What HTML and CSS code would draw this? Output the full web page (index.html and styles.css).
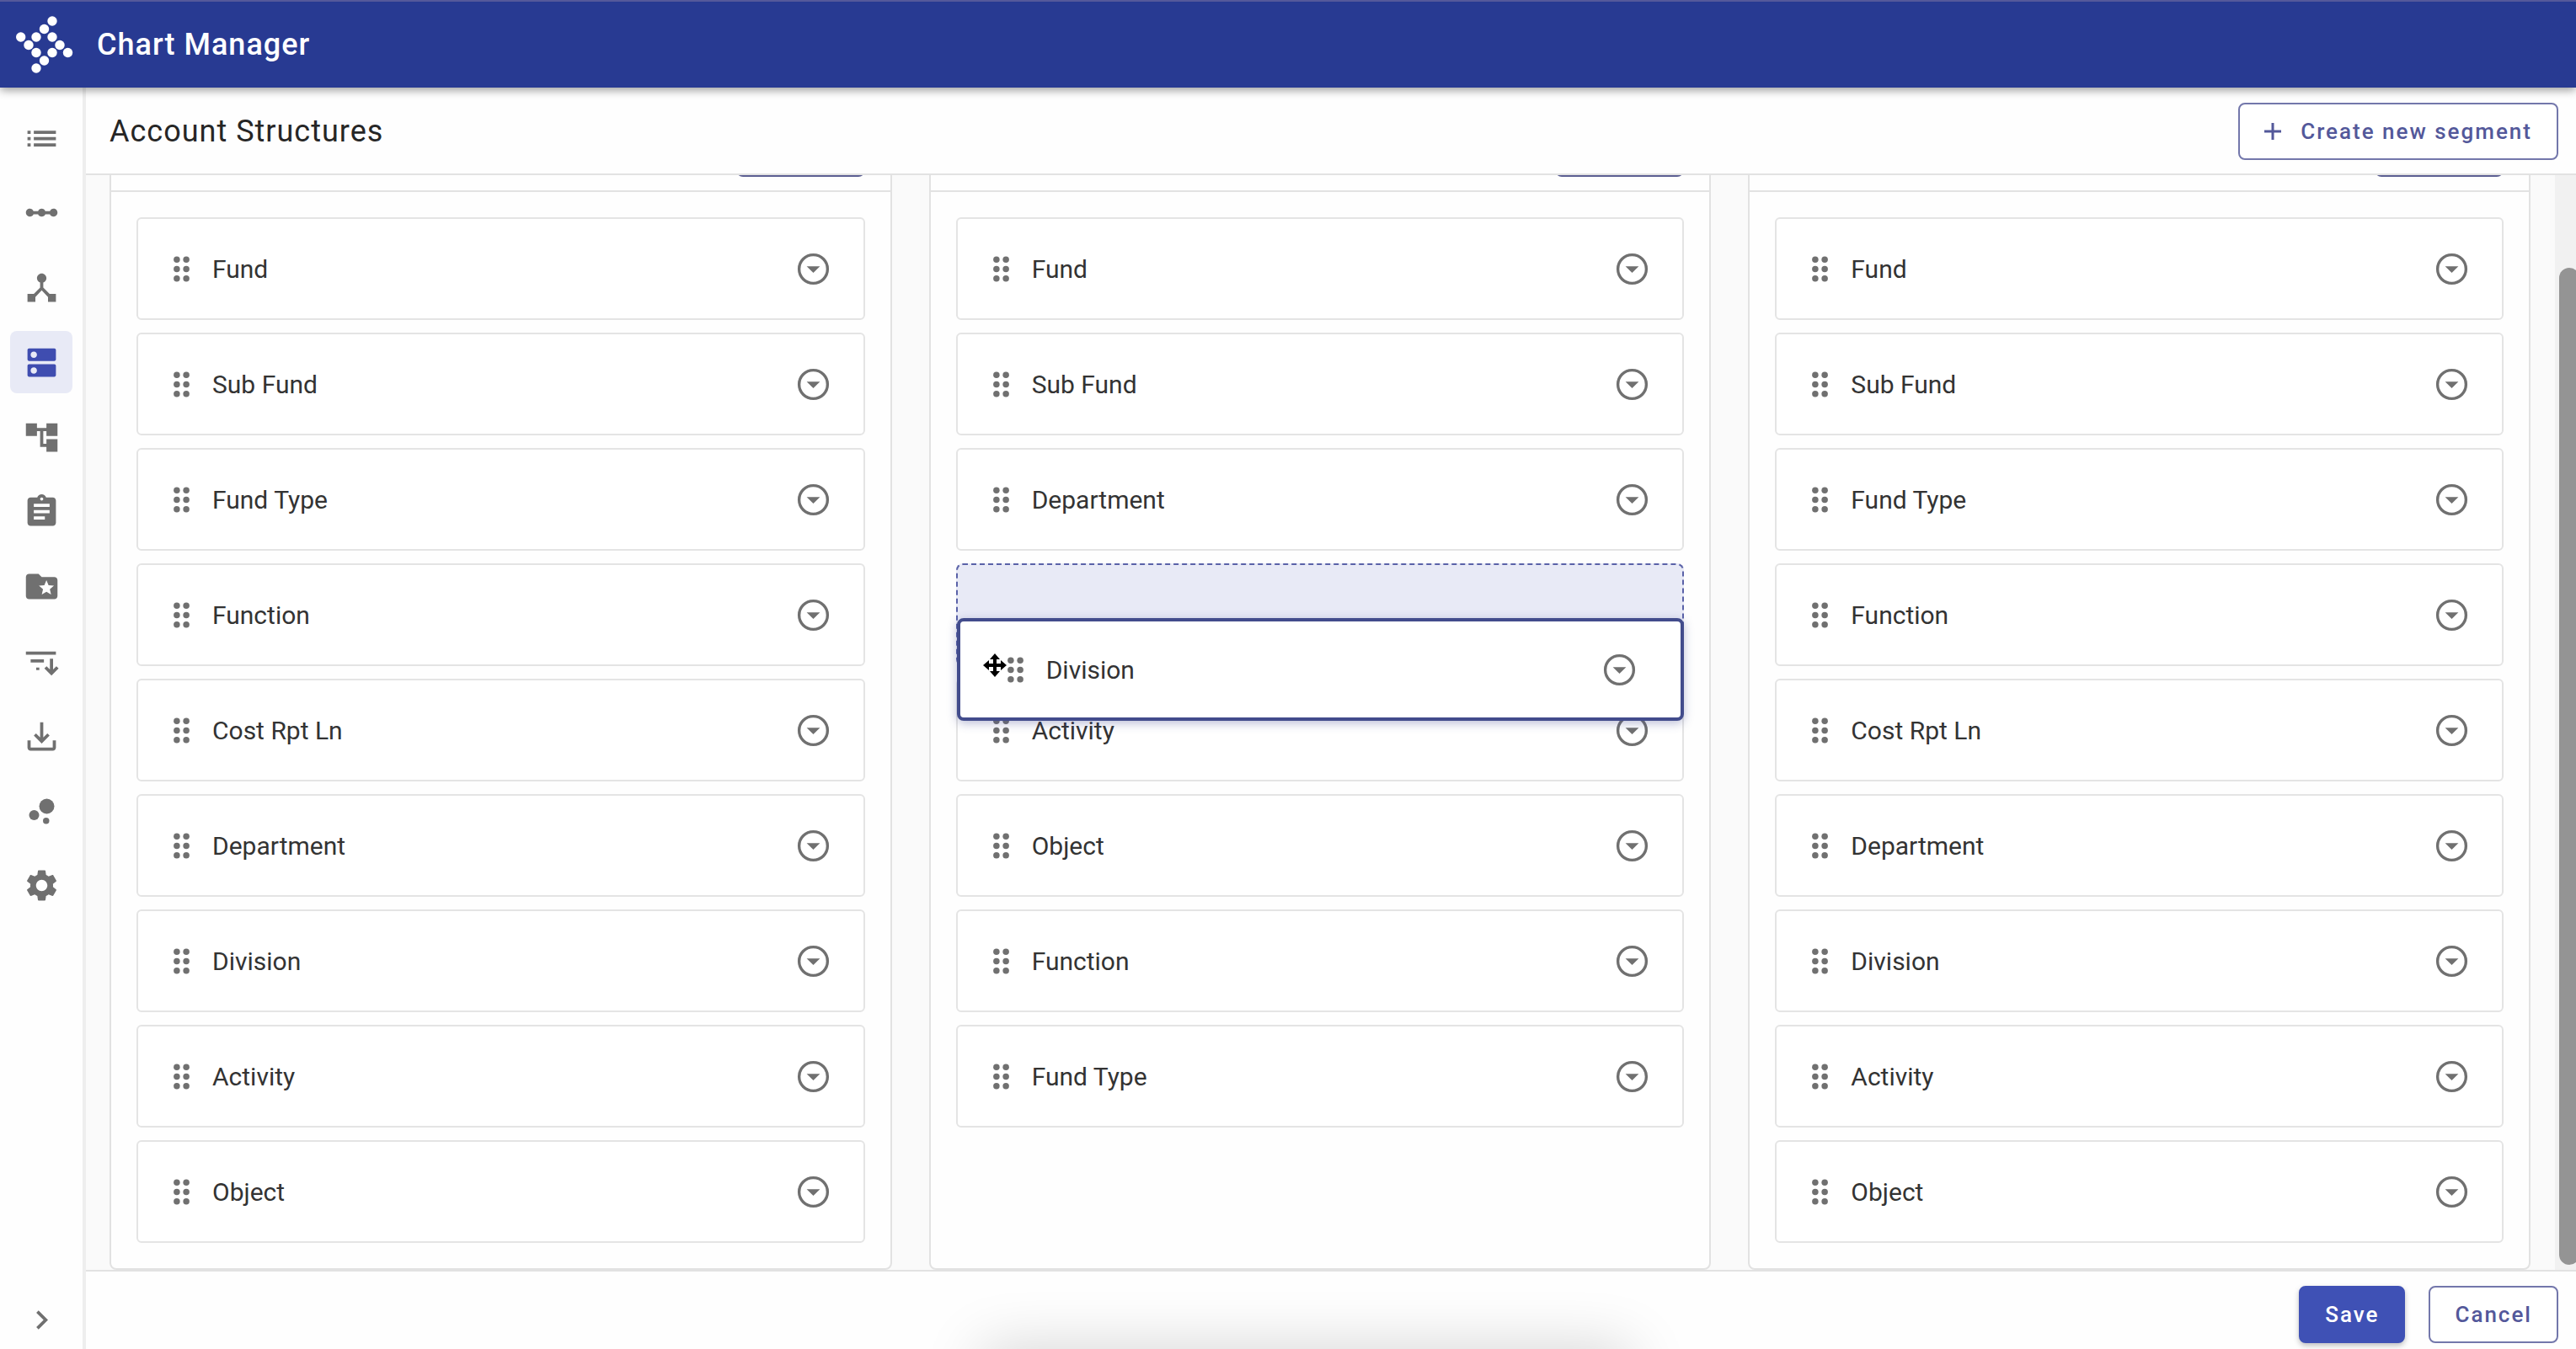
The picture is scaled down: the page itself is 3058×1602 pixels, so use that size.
FILE: index.html
```html
<!DOCTYPE html>
<html lang="en">
<head>
<meta charset="utf-8">
<title>Chart Manager</title>
<link rel="stylesheet" href="styles.css">
</head>
<body>
<svg class="sprite" aria-hidden="true">
  <symbol id="grip" viewBox="0 0 24 24"><circle cx="9" cy="6" r="2"/><circle cx="15" cy="6" r="2"/><circle cx="9" cy="12" r="2"/><circle cx="15" cy="12" r="2"/><circle cx="9" cy="18" r="2"/><circle cx="15" cy="18" r="2"/></symbol>
  <symbol id="drop" viewBox="0 0 24 24"><circle cx="12" cy="12" r="9" fill="none" stroke="currentColor" stroke-width="1.8"/><path d="M7.800 10.200h8.400L12 14.400z"/></symbol>
</svg>

<header class="topbar">
  <svg class="logo" viewBox="0 0 68 68" aria-hidden="true"><circle cx="43" cy="6" r="5.700"/><circle cx="33.500" cy="15.500" r="5.700"/><circle cx="24" cy="25" r="5.700"/><circle cx="43" cy="25" r="5.700"/><circle cx="5.700" cy="25" r="5.700"/><circle cx="15" cy="34.500" r="5.700"/><circle cx="52" cy="34.500" r="5.700"/><circle cx="24" cy="43.500" r="5.700"/><circle cx="43" cy="43.500" r="5.700"/><circle cx="61.500" cy="43.500" r="5.700"/><circle cx="33.500" cy="53" r="5.700"/><circle cx="24" cy="62" r="5.700"/></svg>
  <span class="brand">Chart Manager</span>
</header>

<div class="shell">
  <aside class="sidebar">
    <nav class="nav" aria-label="Main">
      <a class="nav-item" href="#" aria-label="List"><svg class="icon" viewBox="0 0 24 24"><path d="M3 13h2v-2H3v2zm0 4h2v-2H3v2zm0-8h2V7H3v2zm4 4h14v-2H7v2zm0 4h14v-2H7v2zM7 7v2h14V7H7z"/></svg></a>
      <a class="nav-item" href="#" aria-label="Segments"><svg class="icon" viewBox="0 0 24 24"><path d="M19.500 9.500c-1.030 0-1.900.62-2.290 1.500h-2.920C13.900 10.120 13.030 9.500 12 9.500s-1.900.62-2.290 1.500H6.790c-.39-.88-1.260-1.500-2.290-1.500C3.120 9.500 2 10.620 2 12s1.120 2.500 2.500 2.500c1.030 0 1.900-.62 2.290-1.500h2.920c.39.88 1.260 1.500 2.290 1.500s1.900-.62 2.290-1.500h2.920c.39.88 1.260 1.500 2.290 1.500 1.380 0 2.500-1.120 2.500-2.500s-1.120-2.500-2.500-2.500z"/></svg></a>
      <a class="nav-item" href="#" aria-label="Hierarchies"><svg class="icon" viewBox="0 0 24 24"><path d="M17 16l-4-4V8.820C14.160 8.400 15 7.300 15 6c0-1.660-1.340-3-3-3S9 4.340 9 6c0 1.300.84 2.400 2 2.820V12l-4 4H3v5h5v-3.050l4-4.200 4 4.200V21h5v-5h-4z"/></svg></a>
      <a class="nav-item active" href="#" aria-label="Account structures" aria-current="page"><svg class="icon" viewBox="0 0 24 24"><path d="M20 13H4c-.55 0-1 .45-1 1v6c0 .55.45 1 1 1h16c.55 0 1-.45 1-1v-6c0-.55-.45-1-1-1zM7 19c-1.100 0-2-.9-2-2s.9-2 2-2 2 .9 2 2-.9 2-2 2zM20 3H4c-.55 0-1 .45-1 1v6c0 .55.45 1 1 1h16c.55 0 1-.45 1-1V4c0-.55-.45-1-1-1zM7 9c-1.100 0-2-.9-2-2s.9-2 2-2 2 .9 2 2-.9 2-2 2z"/></svg></a>
      <a class="nav-item" href="#" aria-label="Account tree"><svg class="icon" viewBox="0 0 24 24"><path d="M22 11V3h-7v3H9V3H2v8h7V8h2v10h4v3h7v-8h-7v3h-2V8h2v3z"/></svg></a>
      <a class="nav-item" href="#" aria-label="Assignments"><svg class="icon" viewBox="0 0 24 24"><path d="M19 3h-4.180C14.400 1.840 13.300 1 12 1c-1.300 0-2.400.84-2.820 2H5c-1.100 0-2 .9-2 2v14c0 1.100.9 2 2 2h14c1.100 0 2-.9 2-2V5c0-1.100-.9-2-2-2zm-7 0c.55 0 1 .45 1 1s-.45 1-1 1-1-.45-1-1 .45-1 1-1zm2 14H7v-2h7v2zm3-4H7v-2h10v2zm0-4H7V7h10v2z"/></svg></a>
      <a class="nav-item" href="#" aria-label="Favorites"><svg class="icon" viewBox="0 0 24 24"><path d="M20 6h-8l-2-2H4c-1.100 0-1.990.9-1.990 2L2 18c0 1.100.9 2 2 2h16c1.100 0 2-.9 2-2V8c0-1.100-.9-2-2-2zm-2.060 11L15 15.280 12.060 17l.78-3.330-2.590-2.240 3.410-.29L15 8l1.340 3.140 3.410.29-2.590 2.240.78 3.330z"/></svg></a>
      <a class="nav-item" href="#" aria-label="Sort"><svg class="icon" viewBox="0 0 24 24"><path d="M2 5.700h19v2H2zM5 10.700h8.400v2H5zM8.500 15.900h2v1.600h-2zM17.200 10.300h2v6.800l2.100-2.100 1.400 1.400-4.500 4.500-4.500-4.500 1.400-1.400 2.100 2.100z"/></svg></a>
      <a class="nav-item" href="#" aria-label="Download"><svg class="icon" viewBox="0 0 24 24"><path d="M19 14.500V19H5v-4.500H3V19c0 1.100.9 2 2 2h14c1.100 0 2-.9 2-2v-4.500zM13 12.670l2.590-2.580L17 11.500l-5 5-5-5 1.410-1.410L11 12.670V3h2z"/></svg></a>
      <a class="nav-item" href="#" aria-label="Bubbles"><svg class="icon" viewBox="0 0 24 24"><circle cx="7.200" cy="14.400" r="3.200"/><circle cx="14.800" cy="18" r="2"/><circle cx="15.200" cy="8.800" r="4.800"/></svg></a>
      <a class="nav-item" href="#" aria-label="Settings"><svg class="icon" viewBox="0 0 24 24"><path d="M19.140 12.940c.04-.3.060-.61.060-.94 0-.32-.02-.64-.07-.94l2.030-1.580c.18-.14.230-.41.120-.61l-1.920-3.320c-.12-.22-.37-.29-.59-.22l-2.390.96c-.5-.38-1.030-.7-1.620-.94l-.36-2.540c-.04-.24-.24-.41-.48-.41h-3.840c-.24 0-.43.170-.47.410l-.36 2.540c-.59.240-1.130.570-1.620.940l-2.390-.96c-.22-.08-.47 0-.59.220L2.740 8.870c-.12.210-.08.470.120.610l2.030 1.580c-.05.3-.09.630-.09.940s.02.640.070.940l-2.030 1.580c-.18.140-.23.410-.12.610l1.920 3.320c.12.220.370.290.590.220l2.390-.96c.5.380 1.030.7 1.620.940l.36 2.540c.05.240.240.410.480.410h3.840c.24 0 .44-.17.470-.41l.36-2.540c.59-.24 1.130-.56 1.620-.94l2.390.96c.22.080.470 0 .59-.22l1.920-3.320c.12-.22.070-.47-.12-.61l-2.010-1.580zM12 15.600c-1.980 0-3.600-1.620-3.600-3.600s1.620-3.600 3.600-3.600 3.600 1.620 3.600 3.600-1.620 3.600-3.600 3.600z"/></svg></a>
    </nav>
    <button class="expand" type="button" aria-label="Expand menu"><svg class="icon" viewBox="0 0 24 24"><path d="M10 6L8.590 7.410 13.170 12l-4.580 4.590L10 18l6-6z"/></svg></button>
  </aside>

  <main class="page">
    <div class="page-head">
      <h1 class="title">Account Structures</h1>
      <button class="btn btn-create" type="button"><svg class="plus" viewBox="0 0 20 20" aria-hidden="true"><path d="M10 0v20M0 10h20"/></svg>Create new segment</button>
    </div>

    <div class="viewport">
      <div class="columns">
        <section class="column">
          <div class="column-head"><button class="btn column-btn" type="button" aria-label="Edit structure"></button></div>
          <ul class="list">
            <li class="card"><svg class="icon"><use href="#grip"/></svg><span class="label">Fund</span><button class="toggle" type="button" aria-label="Open Fund"><svg class="icon"><use href="#drop"/></svg></button></li>
            <li class="card"><svg class="icon"><use href="#grip"/></svg><span class="label">Sub Fund</span><button class="toggle" type="button" aria-label="Open Sub Fund"><svg class="icon"><use href="#drop"/></svg></button></li>
            <li class="card"><svg class="icon"><use href="#grip"/></svg><span class="label">Fund Type</span><button class="toggle" type="button" aria-label="Open Fund Type"><svg class="icon"><use href="#drop"/></svg></button></li>
            <li class="card"><svg class="icon"><use href="#grip"/></svg><span class="label">Function</span><button class="toggle" type="button" aria-label="Open Function"><svg class="icon"><use href="#drop"/></svg></button></li>
            <li class="card"><svg class="icon"><use href="#grip"/></svg><span class="label">Cost Rpt Ln</span><button class="toggle" type="button" aria-label="Open Cost Rpt Ln"><svg class="icon"><use href="#drop"/></svg></button></li>
            <li class="card"><svg class="icon"><use href="#grip"/></svg><span class="label">Department</span><button class="toggle" type="button" aria-label="Open Department"><svg class="icon"><use href="#drop"/></svg></button></li>
            <li class="card"><svg class="icon"><use href="#grip"/></svg><span class="label">Division</span><button class="toggle" type="button" aria-label="Open Division"><svg class="icon"><use href="#drop"/></svg></button></li>
            <li class="card"><svg class="icon"><use href="#grip"/></svg><span class="label">Activity</span><button class="toggle" type="button" aria-label="Open Activity"><svg class="icon"><use href="#drop"/></svg></button></li>
            <li class="card"><svg class="icon"><use href="#grip"/></svg><span class="label">Object</span><button class="toggle" type="button" aria-label="Open Object"><svg class="icon"><use href="#drop"/></svg></button></li>
          </ul>
        </section>

        <section class="column">
          <div class="column-head"><button class="btn column-btn" type="button" aria-label="Edit structure"></button></div>
          <ul class="list">
            <li class="card"><svg class="icon"><use href="#grip"/></svg><span class="label">Fund</span><button class="toggle" type="button" aria-label="Open Fund"><svg class="icon"><use href="#drop"/></svg></button></li>
            <li class="card"><svg class="icon"><use href="#grip"/></svg><span class="label">Sub Fund</span><button class="toggle" type="button" aria-label="Open Sub Fund"><svg class="icon"><use href="#drop"/></svg></button></li>
            <li class="card"><svg class="icon"><use href="#grip"/></svg><span class="label">Department</span><button class="toggle" type="button" aria-label="Open Department"><svg class="icon"><use href="#drop"/></svg></button></li>
            <li class="slot">
              <div class="card dragged">
                <svg class="icon"><use href="#grip"/></svg><span class="label">Division</span><button class="toggle" type="button" aria-label="Open Division"><svg class="icon"><use href="#drop"/></svg></button>
                <svg class="cursor" viewBox="0 0 28 28" aria-hidden="true"><path d="M14 0l6 7h-4v5h5V8l7 6-7 6v-4h-5v5h4l-6 7-6-7h4v-5H7v4l-7-6 7-6v4h5V7H8z"/></svg>
              </div>
            </li>
            <li class="card"><svg class="icon"><use href="#grip"/></svg><span class="label">Activity</span><button class="toggle" type="button" aria-label="Open Activity"><svg class="icon"><use href="#drop"/></svg></button></li>
            <li class="card"><svg class="icon"><use href="#grip"/></svg><span class="label">Object</span><button class="toggle" type="button" aria-label="Open Object"><svg class="icon"><use href="#drop"/></svg></button></li>
            <li class="card"><svg class="icon"><use href="#grip"/></svg><span class="label">Function</span><button class="toggle" type="button" aria-label="Open Function"><svg class="icon"><use href="#drop"/></svg></button></li>
            <li class="card"><svg class="icon"><use href="#grip"/></svg><span class="label">Fund Type</span><button class="toggle" type="button" aria-label="Open Fund Type"><svg class="icon"><use href="#drop"/></svg></button></li>
          </ul>
        </section>

        <section class="column">
          <div class="column-head"><button class="btn column-btn" type="button" aria-label="Edit structure"></button></div>
          <ul class="list">
            <li class="card"><svg class="icon"><use href="#grip"/></svg><span class="label">Fund</span><button class="toggle" type="button" aria-label="Open Fund"><svg class="icon"><use href="#drop"/></svg></button></li>
            <li class="card"><svg class="icon"><use href="#grip"/></svg><span class="label">Sub Fund</span><button class="toggle" type="button" aria-label="Open Sub Fund"><svg class="icon"><use href="#drop"/></svg></button></li>
            <li class="card"><svg class="icon"><use href="#grip"/></svg><span class="label">Fund Type</span><button class="toggle" type="button" aria-label="Open Fund Type"><svg class="icon"><use href="#drop"/></svg></button></li>
            <li class="card"><svg class="icon"><use href="#grip"/></svg><span class="label">Function</span><button class="toggle" type="button" aria-label="Open Function"><svg class="icon"><use href="#drop"/></svg></button></li>
            <li class="card"><svg class="icon"><use href="#grip"/></svg><span class="label">Cost Rpt Ln</span><button class="toggle" type="button" aria-label="Open Cost Rpt Ln"><svg class="icon"><use href="#drop"/></svg></button></li>
            <li class="card"><svg class="icon"><use href="#grip"/></svg><span class="label">Department</span><button class="toggle" type="button" aria-label="Open Department"><svg class="icon"><use href="#drop"/></svg></button></li>
            <li class="card"><svg class="icon"><use href="#grip"/></svg><span class="label">Division</span><button class="toggle" type="button" aria-label="Open Division"><svg class="icon"><use href="#drop"/></svg></button></li>
            <li class="card"><svg class="icon"><use href="#grip"/></svg><span class="label">Activity</span><button class="toggle" type="button" aria-label="Open Activity"><svg class="icon"><use href="#drop"/></svg></button></li>
            <li class="card"><svg class="icon"><use href="#grip"/></svg><span class="label">Object</span><button class="toggle" type="button" aria-label="Open Object"><svg class="icon"><use href="#drop"/></svg></button></li>
          </ul>
        </section>
      </div>
      <div class="scrollbar"><div class="thumb"></div></div>
    </div>

    <footer class="page-foot">
      <button class="btn btn-save" type="button">Save</button>
      <button class="btn" type="button">Cancel</button>
    </footer>
  </main>
</div>
</body>
</html>
```
FILE: styles.css
```css
* { box-sizing: border-box; }

body {
  margin: 0;
  height: 100vh;
  display: flex;
  flex-direction: column;
  overflow: hidden;
  background: #fefefe;
  color: #333;
  font-family: Roboto, "Liberation Sans", sans-serif;
  font-size: 30px;
}

button { font: inherit; cursor: pointer; }

.sprite { display: none; }

.icon {
  display: block;
  flex: none;
  width: 45px;
  height: 45px;
  fill: currentColor;
  color: #707070;
}

/* Top bar */
.topbar {
  position: relative;
  z-index: 2;
  flex: none;
  display: flex;
  align-items: center;
  gap: 28px;
  height: 104px;
  padding: 0 19px;
  border-top: 2px solid #55599b;
  background: #283a92;
  color: #fff;
  box-shadow: 0 3px 10px rgba(0, 0, 0, .4);
}

.logo { width: 68px; height: 68px; fill: #fff; }

.brand {
  font-size: 36px;
  font-weight: 500;
  letter-spacing: 1px;
}

/* Shell */
.shell {
  flex: 1;
  display: flex;
  min-height: 0;
}

.sidebar {
  flex: none;
  display: flex;
  flex-direction: column;
  justify-content: space-between;
  width: 102px;
  padding-top: 23px;
  border-right: 4px solid #eee;
}

.nav {
  display: flex;
  flex-direction: column;
  align-items: center;
  justify-content: space-between;
  height: 962px;
}

.nav-item,
.expand {
  display: flex;
  align-items: center;
  justify-content: center;
  width: 74px;
  height: 74px;
  border-radius: 8px;
}

.active { background: #e8eaf6; }
.active .icon { color: #3f4db0; }

.expand {
  height: 70px;
  margin: 0 auto;
  padding: 0;
  border: 0;
  background: none;
}

.page {
  flex: 1;
  display: flex;
  flex-direction: column;
  min-width: 0;
}

.page-head {
  flex: none;
  display: flex;
  align-items: center;
  justify-content: space-between;
  height: 104px;
  padding: 2px 21px 0 28px;
  border-bottom: 2px solid #e2e2e2;
}

.title {
  margin: 0;
  font-size: 36px;
  font-weight: 400;
  letter-spacing: 1px;
  color: #262626;
}

.btn {
  display: flex;
  align-items: center;
  justify-content: center;
  height: 68px;
  padding: 0 29px;
  border: 2px solid #7377ab;
  border-radius: 8px;
  background: #fff;
  color: #53589a;
  font-size: 26px;
  font-weight: 500;
  letter-spacing: 2px;
}

.btn-create { gap: 23px; }

.plus {
  width: 20px;
  height: 20px;
  stroke: currentColor;
  stroke-width: 3;
}

/* Scrolled columns */
.viewport {
  flex: 1;
  display: flex;
  min-height: 0;
  overflow: hidden;
  background: #fafafa;
}

.columns {
  flex: 1;
  align-self: flex-end;
  display: grid;
  grid-template-columns: repeat(3, minmax(0, 1fr));
  gap: 44px;
  padding: 0 29px 0 28px;
}

.column {
  border: 2px solid #e2e2e2;
  border-radius: 8px;
  background: #fefefe;
}

.column-head {
  display: flex;
  justify-content: flex-end;
  padding: 16px 30px;
  border-bottom: 2px solid #e2e2e2;
}

.column-btn {
  width: 153px;
  border-color: #5c5f92;
}

.list {
  display: flex;
  flex-direction: column;
  gap: 15px;
  margin: 0;
  padding: 30px;
  list-style: none;
}

.card {
  display: flex;
  align-items: center;
  height: 122px;
  padding: 0 37px 0 29px;
  border: 2px solid #e4e4e4;
  border-radius: 6px;
  background: #fff;
}

.label { flex: 1; padding-left: 14px; }

.toggle {
  padding: 0;
  border: 0;
  background: none;
}

.slot {
  position: relative;
  height: 122px;
  border: 2px dashed #5a62a8;
  border-radius: 8px;
  background: #e8eaf6;
}

.dragged {
  position: absolute;
  z-index: 1;
  top: 63px;
  left: -1px;
  right: -2px;
  padding: 0 50px 0 43px;
  border: 4px solid #424c8c;
  border-radius: 8px;
  box-shadow: 0 3px 12px rgba(60, 70, 140, .35);
}

.cursor {
  position: absolute;
  top: 38px;
  left: 27px;
  width: 28px;
  height: 28px;
}

.scrollbar {
  width: 25px;
  padding: 110px 0 6px 5px;
  overflow: hidden;
  background: #f1f1f1;
}

.thumb {
  width: 24px;
  height: 100%;
  border-radius: 12px;
  background: #949494;
}

/* Footer */
.page-foot {
  position: relative;
  flex: none;
  display: flex;
  align-items: center;
  justify-content: flex-end;
  gap: 28px;
  height: 94px;
  padding: 10px 21px 0 0;
  border-top: 2px solid #e2e2e2;
}

.page-foot::after {
  content: "";
  position: absolute;
  top: 100%;
  left: 36%;
  right: 38%;
  height: 60px;
  box-shadow: 0 0 70px rgba(0, 0, 0, .18);
}

.btn-save {
  border-color: #3f51b5;
  background: #3f51b5;
  color: #fff;
  box-shadow: 0 3px 6px rgba(0, 0, 0, .25);
}
```
